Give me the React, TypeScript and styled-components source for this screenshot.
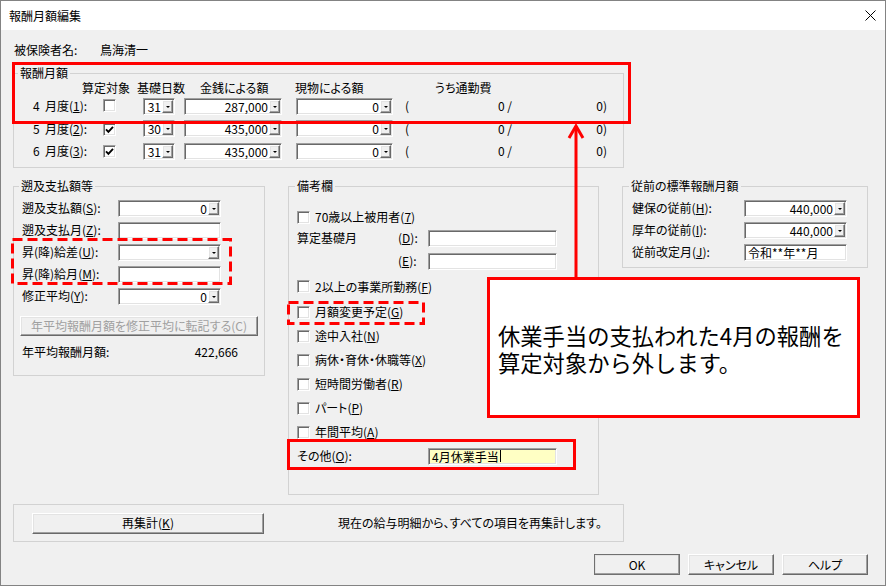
import React from 'react';
import styled, { createGlobalStyle, css } from 'styled-components';

const GlobalStyle = createGlobalStyle`
  html, body {
    margin: 0;
    padding: 0;
    background: #f0f0f0;
  }
  body {
    font-family: "Noto Sans CJK JP", "Noto Sans", sans-serif;
    font-size: 12px;
    color: #000;
    font-feature-settings: "palt";
  }
`;

const sunken = css`
  box-sizing: border-box;
  border: 1px solid;
  border-color: #a0a0a0 #ffffff #ffffff #a0a0a0;
  box-shadow: inset 1px 1px 0 #696969, inset -1px -1px 0 #e3e3e3;
`;

const raised = css`
  box-sizing: border-box;
  border: 1px solid;
  border-color: #ffffff #696969 #696969 #ffffff;
  box-shadow: inset -1px -1px 0 #a0a0a0, inset 1px 1px 0 #e3e3e3;
  background: #f0f0f0;
`;

const Window = styled.div`
  position: relative;
  width: 886px;
  height: 586px;
  box-sizing: border-box;
  border: 1px solid #838383;
  background: #f0f0f0;
  display: flex;
  flex-direction: column;
  overflow: hidden;
`;

const TitleBar = styled.div`
  height: 29px;
  flex-shrink: 0;
  background: #fff;
  display: flex;
  align-items: center;
  justify-content: space-between;
  padding: 0 9px 0 8px;
  font-size: 12px;
  line-height: 14px;
`;

const Body = styled.div`
  flex: 1;
  display: flex;
  flex-direction: column;
  padding: 13px 17px 0 12px;
`;

const NameRow = styled.div`
  display: flex;
  line-height: 14px;
  padding-left: 1px;
`;

const NameLabel = styled.span`
  width: 86px;
`;

const Group = styled.fieldset<{ $w: number }>`
  margin: 0;
  padding: 0;
  min-width: 0;
  width: ${p => p.$w}px;
  box-sizing: border-box;
  border: 1px solid #d2d2d2;
`;

const Legend = styled.legend<{ $ml: number }>`
  padding: 0 2px;
  margin-left: ${p => p.$ml}px;
  line-height: 14px;
  font-size: 12px;
`;

const GroupInner = styled.div<{ $pad: string }>`
  padding: ${p => p.$pad};
  display: flex;
  flex-direction: column;
`;

const Key = styled.u`
  text-decoration: underline;
  text-underline-offset: 1px;
`;

/* 報酬月額 */
const HeadRow = styled.div`
  display: grid;
  grid-template-columns: 54px 55px 63px 95px 140px auto;
  line-height: 14px;
`;

const MonthRows = styled.div`
  display: flex;
  flex-direction: column;
  gap: 5.5px;
  margin-top: 2.5px;
`;

const MonthRow = styled.div`
  display: grid;
  grid-template-columns: 75px 40px 41px 112px 109px 20px 87px 95px;
  align-items: center;
  height: 17px;
  line-height: 14px;
`;

const MonthLabel = styled.span`
  padding-left: 5px;
  white-space: nowrap;
`;

const MonthNo = styled.span`
  display: inline-block;
  width: 12px;
`;

const RightText = styled.span`
  text-align: right;
  white-space: pre;
`;

/* inputs */
const Field = styled.div<{ $w: number; $bg?: string; $align?: string }>`
  ${sunken};
  width: ${p => p.$w}px;
  height: 17px;
  background: ${p => p.$bg || '#fff'};
  display: flex;
  align-items: center;
  justify-content: ${p => p.$align || 'flex-end'};
  padding: 1px 1px 1px 3px;
  line-height: 13px;
  white-space: nowrap;
  overflow: hidden;
`;

const Value = styled.span`
  padding-right: 1px;
`;

const DropBtn = styled.span`
  ${raised};
  width: 11px;
  height: 13px;
  flex-shrink: 0;
  display: flex;
  align-items: center;
  justify-content: center;

  &::after {
    content: '';
    border-left: 2px solid transparent;
    border-right: 2px solid transparent;
    border-top: 2px solid #000;
    margin-top: 1px;
  }
`;

const Caret = styled.span`
  width: 1px;
  height: 12px;
  background: #000;
  margin-left: 1px;
`;

const CheckBox = styled.span`
  ${sunken};
  width: 13px;
  height: 13px;
  background: #fff;
  display: inline-flex;
  align-items: center;
  justify-content: center;
  flex-shrink: 0;
`;

const Check: React.FC<{ on?: boolean }> = ({ on }) => (
  <CheckBox>
    {on && (
      <svg width="9" height="9" viewBox="0 0 9 9">
        <polyline points="1,4.3 3.4,6.8 8,1.8" fill="none" stroke="#000" strokeWidth="1.9" />
      </svg>
    )}
  </CheckBox>
);

const Combo: React.FC<{ w: number; value?: string }> = ({ w, value }) => (
  <Field $w={w}>
    <Value>{value}</Value>
    <DropBtn />
  </Field>
);

/* middle columns */
const Columns = styled.div`
  display: flex;
  align-items: flex-start;
  gap: 23px;
  margin-top: 11px;
`;

const FormRows = styled.div<{ $gap: number }>`
  display: flex;
  flex-direction: column;
  gap: ${p => p.$gap}px;
`;

const FormRow = styled.div<{ $cols: string }>`
  display: grid;
  grid-template-columns: ${p => p.$cols};
  align-items: center;
  height: 17px;
  line-height: 14px;
  white-space: nowrap;
`;

const Button = styled.div<{ $w: number; $h: number; $disabled?: boolean; $default?: boolean }>`
  ${raised};
  width: ${p => p.$w}px;
  height: ${p => p.$h}px;
  display: flex;
  align-items: center;
  justify-content: center;
  line-height: 14px;
  color: ${p => (p.$disabled ? '#a0a0a0' : '#000')};
  ${p =>
    p.$default &&
    css`
      border-color: #ffffff #404040 #404040 #ffffff;
      outline: 1px solid #707070;
      outline-offset: -1px;
    `}
`;

const WideButton = styled(Button)`
  margin: 11.5px 0 0 -2px;
`;

const SumRow = styled.div`
  display: flex;
  justify-content: space-between;
  width: 216px;
  line-height: 14px;
  margin-top: 9px;
`;

const NoteRow = styled.div<{ $h: number; $cols?: string }>`
  height: ${p => p.$h}px;
  display: ${p => (p.$cols ? 'grid' : 'flex')};
  grid-template-columns: ${p => p.$cols || 'none'};
  align-items: center;
  gap: ${p => (p.$cols ? 0 : 5)}px;
  line-height: 14px;
  white-space: nowrap;
`;

/* bottom */
const Panel = styled.div`
  margin-top: 9px;
  width: 611px;
  height: 38px;
  box-sizing: border-box;
  border: 1px solid #d2d2d2;
  display: flex;
  align-items: center;
  padding-left: 18px;
  gap: 74px;
  line-height: 14px;
`;

const DialogButtons = styled.div`
  display: flex;
  justify-content: flex-end;
  gap: 8px;
  margin-top: 12px;
`;

/* annotations */
const RedBox = styled.div<{ $x: number; $y: number; $w: number; $h: number }>`
  position: absolute;
  left: ${p => p.$x - 1}px;
  top: ${p => p.$y - 1}px;
  width: ${p => p.$w}px;
  height: ${p => p.$h}px;
  box-sizing: border-box;
  border: 3px solid #ff0000;
  pointer-events: none;
`;

const DashedSvg = styled.svg<{ $x: number; $y: number }>`
  position: absolute;
  left: ${p => p.$x - 1}px;
  top: ${p => p.$y - 1}px;
  pointer-events: none;
`;

const DashedBox: React.FC<{ x: number; y: number; w: number; h: number }> = ({ x, y, w, h }) => (
  <DashedSvg $x={x} $y={y} width={w} height={h}>
    <rect x="1.5" y="1.5" width={w - 3} height={h - 3} fill="none" stroke="#ff0000" strokeWidth="3" strokeDasharray="10 5" />
  </DashedSvg>
);

const Callout = styled.div`
  position: absolute;
  left: 486px;
  top: 276px;
  width: 373px;
  height: 141px;
  box-sizing: border-box;
  border: 3px solid #ff0000;
  background: #fff;
  display: flex;
  align-items: center;
  padding: 2px 0 0 8px;
  font-size: 22.3px;
  line-height: 27px;
  font-feature-settings: normal;
`;

const ArrowSvg = styled.svg`
  position: absolute;
  left: 559px;
  top: 119px;
`;

const months = [
  { n: '4', k: '1', on: false, days: '31', pay: '287,000' },
  { n: '5', k: '2', on: true, days: '30', pay: '435,000' },
  { n: '6', k: '3', on: true, days: '31', pay: '435,000' },
];

const retro = [
  { label: '遡及支払額', k: 'S', combo: true, value: '0' },
  { label: '遡及支払月', k: 'Z', combo: false, value: '' },
  { label: '昇(降)給差', k: 'U', combo: true, value: '' },
  { label: '昇(降)給月', k: 'M', combo: false, value: '' },
  { label: '修正平均', k: 'Y', combo: true, value: '0' },
];

const notesAfter = [
  { label: '2以上の事業所勤務', k: 'F', h: 27 },
  { label: '月額変更予定', k: 'G', h: 24 },
  { label: '途中入社', k: 'N', h: 24 },
  { label: '病休・育休・休職等', k: 'X', h: 24 },
  { label: '短時間労働者', k: 'R', h: 24 },
  { label: 'パート', k: 'P', h: 24 },
  { label: '年間平均', k: 'A', h: 24 },
];

const App: React.FC = () => {
  return (
    <>
      <GlobalStyle />
      <Window>
        <TitleBar>
          <span>報酬月額編集</span>
          <svg width="11" height="11" viewBox="0 0 11 11">
            <path d="M0.5 0.5 L10.5 10.5 M10.5 0.5 L0.5 10.5" stroke="#000" strokeWidth="1" />
          </svg>
        </TitleBar>

        <Body>
          <NameRow>
            <NameLabel>被保険者名:</NameLabel>
            <span>鳥海清一</span>
          </NameRow>

          <Group $w={611} style={{ marginTop: 9 }}>
            <Legend $ml={4}>報酬月額</Legend>
            <GroupInner $pad="1px 0 7.5px 14px">
              <HeadRow>
                <span />
                <span>算定対象</span>
                <span>基礎日数</span>
                <span>金銭による額</span>
                <span>現物による額</span>
                <span>うち通勤費</span>
              </HeadRow>
              <MonthRows>
                {months.map(m => (
                  <MonthRow key={m.n}>
                    <MonthLabel>
                      <MonthNo>{m.n}</MonthNo>月度(<Key>{m.k}</Key>):
                    </MonthLabel>
                    <span>
                      <Check on={m.on} />
                    </span>
                    <Combo w={32} value={m.days} />
                    <Combo w={98} value={m.pay} />
                    <Combo w={97} value="0" />
                    <span>(</span>
                    <RightText>0 /</RightText>
                    <RightText>0)</RightText>
                  </MonthRow>
                ))}
              </MonthRows>
            </GroupInner>
          </Group>

          <Columns>
            <Group $w={252}>
              <Legend $ml={5}>遡及支払額等</Legend>
              <GroupInner $pad="6.5px 0 16px 8px">
                <FormRows $gap={5}>
                  {retro.map(r => (
                    <FormRow key={r.k} $cols="96px 103px">
                      <span>
                        {r.label}(<Key>{r.k}</Key>):
                      </span>
                      {r.combo ? <Combo w={103} value={r.value} /> : <Field $w={103} />}
                    </FormRow>
                  ))}
                </FormRows>
                <WideButton $w={238} $h={20} $disabled>
                  年平均報酬月額を修正平均に転記する(C)
                </WideButton>
                <SumRow>
                  <span>年平均報酬月額:</span>
                  <span>422,666</span>
                </SumRow>
              </GroupInner>
            </Group>

            <Group $w={311}>
              <Legend $ml={6}>備考欄</Legend>
              <GroupInner $pad="14px 0 26px 8px">
                <NoteRow $h={20}>
                  <Check />
                  <span>
                    70歳以上被用者(<Key>7</Key>)
                  </span>
                </NoteRow>
                <NoteRow $h={22} $cols="101px 30px 129px">
                  <span>算定基礎月</span>
                  <span>
                    (<Key>D</Key>):
                  </span>
                  <Field $w={129} />
                </NoteRow>
                <NoteRow $h={24} $cols="101px 30px 129px">
                  <span />
                  <span>
                    (<Key>E</Key>):
                  </span>
                  <Field $w={129} />
                </NoteRow>
                {notesAfter.map(n => (
                  <NoteRow key={n.k} $h={n.h}>
                    <Check />
                    <span>
                      {n.label}(<Key>{n.k}</Key>)
                    </span>
                  </NoteRow>
                ))}
                <NoteRow $h={24} $cols="131px 129px">
                  <span>
                    その他(<Key>O</Key>):
                  </span>
                  <Field $w={129} $bg="#ffffc4" $align="flex-start">
                    <span>4月休業手当</span>
                    <Caret />
                  </Field>
                </NoteRow>
              </GroupInner>
            </Group>

            <Group $w={246}>
              <Legend $ml={6}>従前の標準報酬月額</Legend>
              <GroupInner $pad="6.5px 0 6px 9px">
                <FormRows $gap={5}>
                  <FormRow $cols="112px 103px">
                    <span>
                      健保の従前(<Key>H</Key>):
                    </span>
                    <Combo w={103} value="440,000" />
                  </FormRow>
                  <FormRow $cols="112px 103px">
                    <span>
                      厚年の従前(<Key>I</Key>):
                    </span>
                    <Combo w={103} value="440,000" />
                  </FormRow>
                  <FormRow $cols="112px 103px">
                    <span>
                      従前改定月(<Key>J</Key>):
                    </span>
                    <Field $w={103} $align="flex-start">
                      令和**年**月
                    </Field>
                  </FormRow>
                </FormRows>
              </GroupInner>
            </Group>
          </Columns>

          <Panel>
            <Button $w={232} $h={21}>
              再集計(<Key>K</Key>)
            </Button>
            <span>現在の給与明細から、すべての項目を再集計します。</span>
          </Panel>

          <DialogButtons>
            <Button $w={86} $h={21} $default>
              OK
            </Button>
            <Button $w={86} $h={21}>
              キャンセル
            </Button>
            <Button $w={86} $h={21}>
              ヘルプ
            </Button>
          </DialogButtons>
        </Body>

        <RedBox $x={12} $y={62} $w={619} $h={62} />
        <DashedBox x={11} y={238} w={221} h={47} />
        <DashedBox x={287} y={301} w={138} h={24} />
        <RedBox $x={287} $y={439} $w={289} $h={31} />

        <ArrowSvg width="32" height="160" viewBox="0 0 32 160">
          <line x1="16" y1="6" x2="16" y2="160" stroke="#ff0000" strokeWidth="3" />
          <polyline points="9,18 16,6 23,18" fill="none" stroke="#ff0000" strokeWidth="3" strokeLinejoin="miter" />
        </ArrowSvg>

        <Callout>
          <div>
            休業手当の支払われた4月の報酬を
            <br />
            算定対象から外します。
          </div>
        </Callout>
      </Window>
    </>
  );
};

export default App;
